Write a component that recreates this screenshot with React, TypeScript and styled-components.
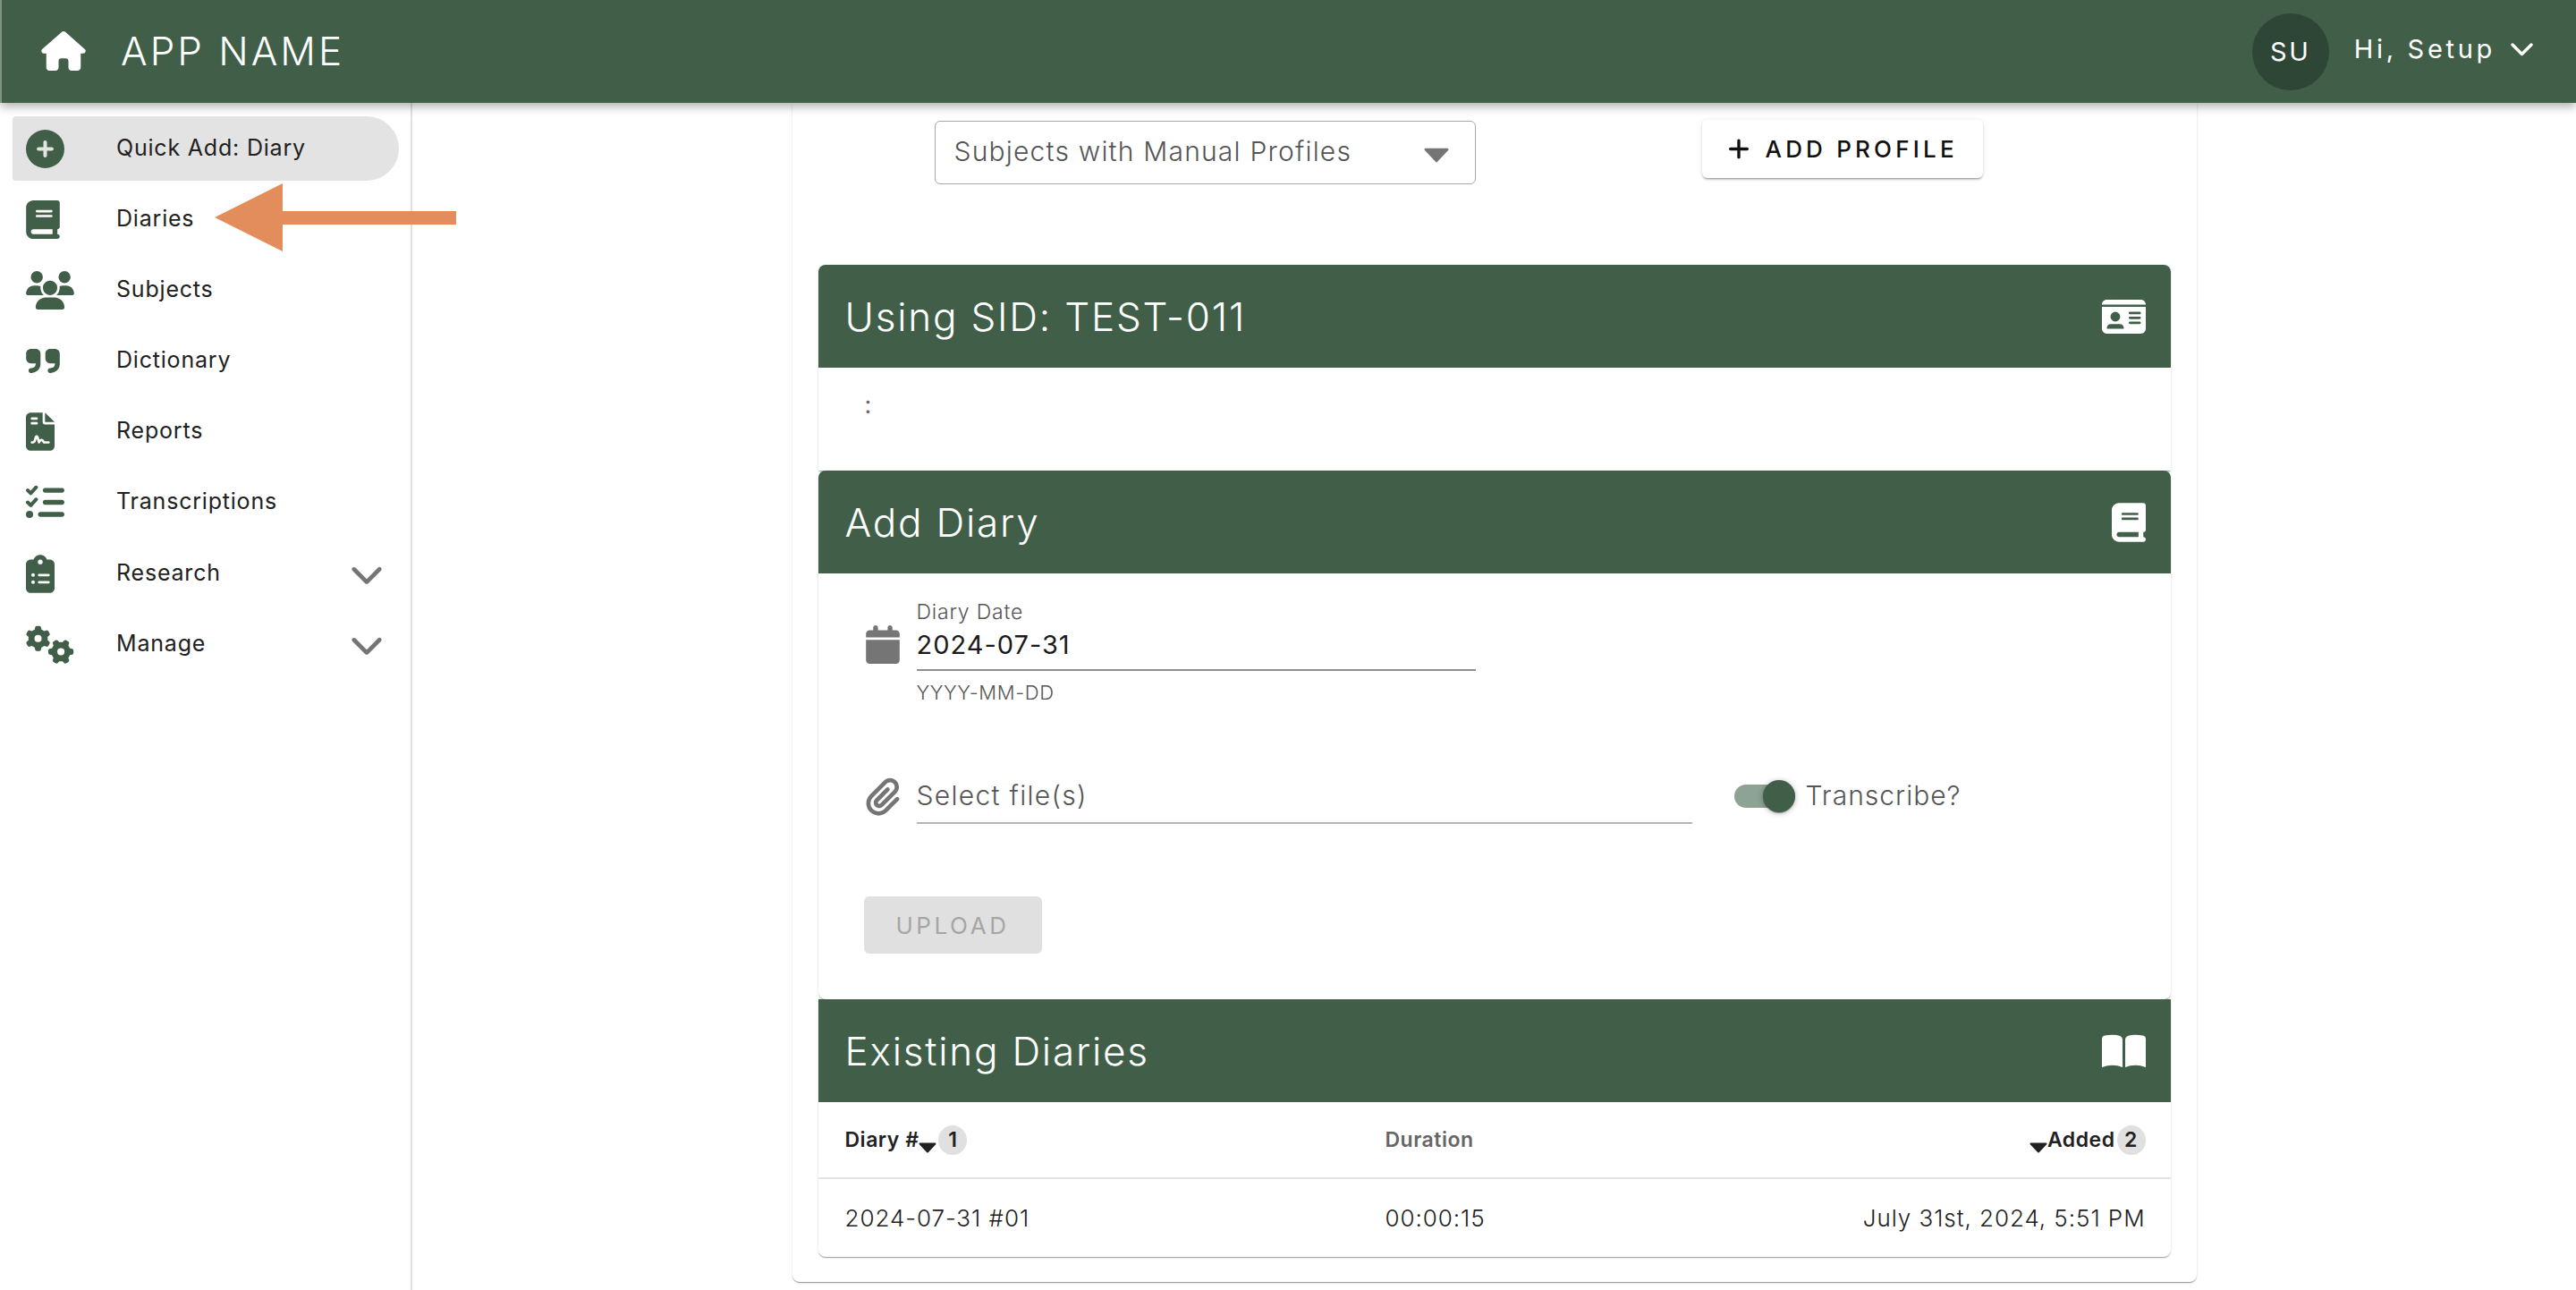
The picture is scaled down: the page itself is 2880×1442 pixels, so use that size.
import React from "react";
import styled, { createGlobalStyle } from "styled-components";
import {
  FaBook,
  FaCalendar,
  FaChevronDown,
  FaCirclePlus,
  FaClipboardList,
  FaFileContract,
  FaGears,
  FaHouse,
  FaIdCard,
  FaListCheck,
  FaPaperclip,
  FaPlus,
  FaQuoteRight,
  FaUsers,
} from "react-icons/fa6";

const GREEN = "#415f48";
const FONT = `Inter, "Noto Sans", sans-serif`;

const GlobalStyle = createGlobalStyle`
  html, body {
    margin: 0;
    padding: 0;
    background: #fff;
    overflow: hidden;
  }
  * { box-sizing: border-box; }
`;

const Page = styled.div`
  width: 2880px;
  height: 1442px;
  overflow: hidden;
  position: relative;
  font-family: ${FONT};
  color: #212121;
`;

const Header = styled.header`
  position: relative;
  z-index: 2;
  height: 115px;
  background: ${GREEN};
  border-left: 2px solid #7f9483;
  box-shadow: 0 4px 10px rgba(0, 0, 0, 0.32);
  display: flex;
  align-items: center;
  padding: 0 48px 0 44px;
  color: #fff;
`;

const HomeIcon = styled(FaHouse)`
  width: 50px;
  height: 44px;
  margin-top: -1px;
`;

const AppName = styled.div`
  margin-left: 39px;
  font-size: 44px;
  font-weight: 300;
  letter-spacing: 3px;
  margin-top: -2px;
`;

const UserArea = styled.div`
  margin-left: auto;
  display: flex;
  align-items: center;
`;

const Avatar = styled.div`
  width: 86px;
  height: 86px;
  border-radius: 50%;
  background: #2d4636;
  display: flex;
  align-items: center;
  justify-content: center;
  font-size: 29px;
  letter-spacing: 2.6px;
`;

const Greeting = styled.div`
  margin-left: 28px;
  font-size: 29px;
  letter-spacing: 3.7px;
  margin-top: -6px;
`;

const GreetingCaret = styled.svg`
  width: 25px;
  height: 15px;
  margin-left: 17px;
  margin-top: -4px;
`;

const Body = styled.div`
  display: flex;
  height: 1327px;
`;

const Sidebar = styled.nav`
  width: 461px;
  flex: none;
  border-right: 2px solid #e0e0e0;
  padding: 15px 14px 0;
  display: flex;
  flex-direction: column;
  gap: 7.2px;
`;

const NavItem = styled.div<{ $active?: boolean }>`
  height: 72px;
  width: 432px;
  display: flex;
  align-items: center;
  padding: 0 17px 0 15px;
  border-radius: 4px 36px 36px 4px;
  background: ${(p) => (p.$active ? "#e3e3e3" : "transparent")};
`;

const NavIcon = styled.div<{ $w: number }>`
  width: 101px;
  flex: none;
  display: flex;
  align-items: center;
  color: ${GREEN};
  svg {
    height: 43px;
    width: ${(p) => p.$w}px;
    display: block;
  }
`;

const NavLabel = styled.div`
  font-size: 25px;
  letter-spacing: 0.8px;
  font-weight: 400;
  margin-top: -3px;
`;

const NavChevron = styled(FaChevronDown)`
  margin-left: auto;
  width: 38px;
  height: 38px;
  color: #757575;
`;

const Main = styled.main`
  flex: 1;
  display: flex;
  justify-content: center;
`;

const OuterCard = styled.div`
  width: 1570px;
  height: 1318px;
  padding: 19px 29px 0;
  border-radius: 0 0 8px 8px;
  box-shadow: 0 2px 1px -1px rgba(0, 0, 0, 0.25), 0 1px 1px 0 rgba(0, 0, 0, 0.14),
    0 1px 3px 0 rgba(0, 0, 0, 0.12);
`;

const TopRow = styled.div`
  height: 162px;
  display: flex;
  align-items: flex-start;
  padding-left: 130px;
`;

const SelectBox = styled.div`
  width: 605px;
  height: 71px;
  border: 1px solid #a8a8a8;
  border-radius: 6px;
  margin-top: 1px;
  display: flex;
  align-items: center;
  padding: 0 28px 3px 21px;
  font-size: 30px;
  font-weight: 300;
  letter-spacing: 1.2px;
  color: #555;
`;

const SelectCaret = styled.svg`
  width: 30px;
  height: 17px;
  margin-left: auto;
  margin-top: 8px;
`;

const AddButton = styled.button`
  width: 314px;
  height: 65px;
  margin-left: 253px;
  border: 0;
  border-radius: 6px;
  background: #fff;
  display: flex;
  align-items: center;
  padding: 0 0 0 29px;
  font-family: ${FONT};
  font-size: 26px;
  font-weight: 500;
  letter-spacing: 4.2px;
  color: #111;
  box-shadow: 0 3px 1px -2px rgba(0, 0, 0, 0.2), 0 2px 2px 0 rgba(0, 0, 0, 0.14),
    0 1px 5px 0 rgba(0, 0, 0, 0.12);
  svg {
    width: 24px;
    height: 27px;
    margin-right: 18px;
  }
`;

const Panel = styled.section<{ $radius: string }>`
  border-radius: ${(p) => p.$radius};
  overflow: hidden;
  box-shadow: 0 2px 1px -1px rgba(0, 0, 0, 0.2), 0 1px 1px 0 rgba(0, 0, 0, 0.14),
    0 1px 3px 0 rgba(0, 0, 0, 0.12);
`;

const PanelHeader = styled.div<{ $w: number }>`
  height: 115px;
  background: ${GREEN};
  color: #fff;
  display: flex;
  align-items: center;
  justify-content: space-between;
  padding: 0 28px 0 30px;
  font-size: 44px;
  font-weight: 300;
  letter-spacing: 1.8px;
  svg {
    height: 44px;
    width: ${(p) => p.$w}px;
    display: block;
  }
`;

const SidBody = styled.div`
  height: 115px;
  padding: 22px 0 0 52px;
  font-size: 27px;
  line-height: 40px;
  color: #666;
`;

const DiaryBody = styled.div`
  padding: 30px 0 51px 51px;
`;

const FieldRow = styled.div`
  display: flex;
  align-items: flex-start;
`;

const FieldIcon = styled.div<{ $top: number }>`
  width: 57px;
  margin-left: 2px;
  flex: none;
  padding-top: ${(p) => p.$top}px;
  color: #757575;
  svg {
    height: 43px;
    width: 38px;
    display: block;
  }
`;

const DateField = styled.div`
  width: 625px;
`;

const FieldLabel = styled.div`
  height: 26px;
  line-height: 26px;
  font-size: 23px;
  font-weight: 300;
  letter-spacing: 0.8px;
  color: #555;
`;

const FieldValue = styled.div`
  height: 48px;
  margin-top: 5px;
  border-bottom: 2px solid #8f8f8f;
  line-height: 38px;
  font-size: 29px;
  font-weight: 400;
  letter-spacing: 1px;
  color: #1a1a1a;
`;

const HelperText = styled.div`
  height: 26px;
  line-height: 26px;
  margin-top: 11px;
  font-size: 22px;
  font-weight: 300;
  letter-spacing: 0.6px;
  color: #555;
`;

const FileRow = styled(FieldRow)`
  margin-top: 73px;
`;

const FileField = styled.div`
  width: 867px;
  height: 61px;
  border-bottom: 2px solid #b5b5b5;
  line-height: 59px;
  font-size: 30px;
  font-weight: 300;
  letter-spacing: 1.3px;
  color: #555;
`;

const Toggle = styled.div`
  position: relative;
  width: 68px;
  height: 26px;
  margin: 17px 0 0 47px;
  border-radius: 13px;
  background: #8da394;
`;

const ToggleThumb = styled.div`
  position: absolute;
  right: 0;
  top: -5px;
  width: 36px;
  height: 36px;
  border-radius: 50%;
  background: ${GREEN};
  box-shadow: 0 2px 1px -1px rgba(0, 0, 0, 0.2), 0 1px 1px 0 rgba(0, 0, 0, 0.14),
    0 1px 6px 0 rgba(0, 0, 0, 0.3);
`;

const ToggleLabel = styled.div`
  margin: 11px 0 0 12px;
  font-size: 30px;
  font-weight: 300;
  letter-spacing: 1px;
  line-height: 36px;
  color: #555;
`;

const UploadButton = styled.button`
  display: block;
  width: 199px;
  height: 64px;
  margin-top: 81px;
  border: 0;
  border-radius: 6px;
  background: #e0e0e0;
  font-family: ${FONT};
  font-size: 26px;
  font-weight: 400;
  letter-spacing: 3.6px;
  color: #a6a6a6;
`;

const TableRow = styled.div<{ $head?: boolean }>`
  height: ${(p) => (p.$head ? 86 : 87)}px;
  display: grid;
  grid-template-columns: 604px 1fr auto;
  align-items: center;
  padding: 0 28px 0 30px;
  border-bottom: ${(p) => (p.$head ? "2px solid #e3e3e3" : "0")};
  font-size: ${(p) => (p.$head ? 23 : 26)}px;
  letter-spacing: ${(p) => (p.$head ? 0.5 : 0.95)}px;
  font-weight: ${(p) => (p.$head ? 600 : 350)};
`;

const SortCell = styled.div`
  display: flex;
  align-items: center;
`;

const MutedHead = styled.div`
  color: #666;
`;

const SortCaret = styled.svg`
  width: 20px;
  height: 12px;
  margin-top: 17px;
  flex: none;
`;

const SortBadge = styled.div<{ $gap: number }>`
  width: 32px;
  height: 33px;
  margin-left: ${(p) => p.$gap}px;
  border-radius: 50%;
  background: #e0e0e0;
  display: flex;
  align-items: center;
  justify-content: center;
  font-size: 23px;
`;

const Arrow = styled.svg`
  position: absolute;
  left: 240px;
  top: 205px;
  width: 270px;
  height: 76px;
  z-index: 3;
`;

const Caret = ({ color, as: Wrap }: { color: string; as: typeof SortCaret }) => (
  <Wrap viewBox="0 0 20 12">
    <path d="M1.5 1.5h17L10 10.5z" fill={color} stroke={color} strokeWidth="2" strokeLinejoin="round" />
  </Wrap>
);

// the open book in the reference is two flat pages, not the fa6 shape
const OpenBook = () => (
  <svg viewBox="0 0 49 37">
    <path d="M0 5Q0 1.5 3.5 1Q14 -.6 20 1.5Q23 2.5 23 6V36.5Q12 32 0 36.5z" fill="#fff" />
    <path d="M49 5Q49 1.5 45.5 1Q35 -.6 29 1.5Q26 2.5 26 6V36.5Q37 32 49 36.5z" fill="#fff" />
  </svg>
);

const navItems = [
  { label: "Quick Add: Diary", icon: <FaCirclePlus />, w: 43, active: true },
  { label: "Diaries", icon: <FaBook />, w: 38 },
  { label: "Subjects", icon: <FaUsers />, w: 54 },
  { label: "Dictionary", icon: <FaQuoteRight />, w: 38 },
  { label: "Reports", icon: <FaFileContract />, w: 32 },
  { label: "Transcriptions", icon: <FaListCheck />, w: 43 },
  { label: "Research", icon: <FaClipboardList />, w: 32, more: true },
  { label: "Manage", icon: <FaGears />, w: 54, more: true },
];

export default function App() {
  return (
    <Page>
      <GlobalStyle />
      <Header>
        <HomeIcon />
        <AppName>APP NAME</AppName>
        <UserArea>
          <Avatar>SU</Avatar>
          <Greeting>Hi, Setup</Greeting>
          <GreetingCaret viewBox="0 0 25 15">
            <path d="M2 2l10.5 10.5L23 2" fill="none" stroke="#fff" strokeWidth="3.4" strokeLinecap="round" strokeLinejoin="round" />
          </GreetingCaret>
        </UserArea>
      </Header>
      <Body>
        <Sidebar>
          {navItems.map((item) => (
            <NavItem key={item.label} $active={item.active}>
              <NavIcon $w={item.w}>{item.icon}</NavIcon>
              <NavLabel>{item.label}</NavLabel>
              {item.more && <NavChevron />}
            </NavItem>
          ))}
        </Sidebar>
        <Main>
          <OuterCard>
            <TopRow>
              <SelectBox>
                Subjects with Manual Profiles
                <Caret color="#757575" as={SelectCaret} />
              </SelectBox>
              <AddButton>
                <FaPlus />
                ADD PROFILE
              </AddButton>
            </TopRow>
            <Panel $radius="8px 8px 0 0">
              <PanelHeader $w={49}>
                Using SID: TEST-011
                <FaIdCard />
              </PanelHeader>
              <SidBody>:</SidBody>
            </Panel>
            <Panel $radius="8px">
              <PanelHeader $w={38}>
                Add Diary
                <FaBook />
              </PanelHeader>
              <DiaryBody>
                <FieldRow>
                  <FieldIcon $top={28}>
                    <FaCalendar />
                  </FieldIcon>
                  <DateField>
                    <FieldLabel>Diary Date</FieldLabel>
                    <FieldValue>2024-07-31</FieldValue>
                    <HelperText>YYYY-MM-DD</HelperText>
                  </DateField>
                </FieldRow>
                <FileRow>
                  <FieldIcon $top={9}>
                    <FaPaperclip />
                  </FieldIcon>
                  <FileField>Select file(s)</FileField>
                  <Toggle>
                    <ToggleThumb />
                  </Toggle>
                  <ToggleLabel>Transcribe?</ToggleLabel>
                </FileRow>
                <UploadButton>UPLOAD</UploadButton>
              </DiaryBody>
            </Panel>
            <Panel $radius="0 0 8px 8px">
              <PanelHeader $w={49}>
                Existing Diaries
                <OpenBook />
              </PanelHeader>
              <TableRow $head>
                <SortCell>
                  Diary #
                  <Caret color="#212121" as={SortCaret} />
                  <SortBadge $gap={2}>1</SortBadge>
                </SortCell>
                <MutedHead>Duration</MutedHead>
                <SortCell>
                  <Caret color="#212121" as={SortCaret} />
                  Added
                  <SortBadge $gap={2}>2</SortBadge>
                </SortCell>
              </TableRow>
              <TableRow>
                <div>2024-07-31 #01</div>
                <div>00:00:15</div>
                <div>July 31st, 2024, 5:51 PM</div>
              </TableRow>
            </Panel>
          </OuterCard>
        </Main>
      </Body>
      <Arrow viewBox="0 0 270 76">
        <path d="M0 38L76 0V31H270V46H76V76z" fill="#e38d5c" />
      </Arrow>
    </Page>
  );
}
